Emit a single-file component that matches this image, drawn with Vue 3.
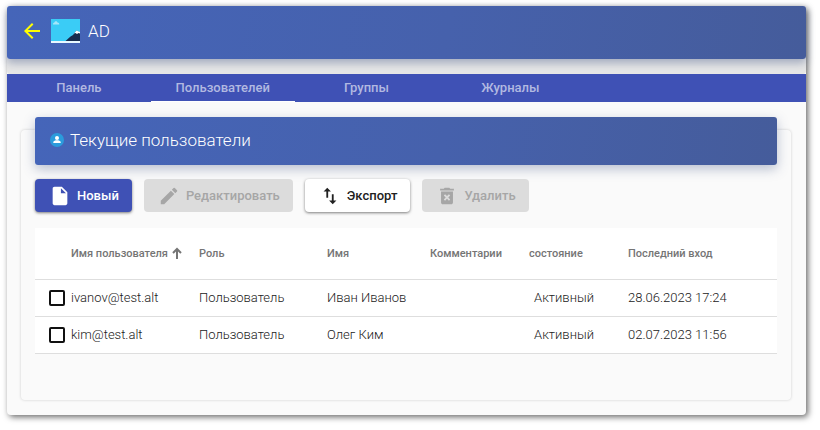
<script setup>
import { ref } from 'vue'

const tabs = ['Панель', 'Пользователей', 'Группы', 'Журналы']
const activeTab = ref('Пользователей')
const users = ref([
  { login: 'ivanov@test.alt', role: 'Пользователь', name: 'Иван Иванов', comment: '', state: 'Активный', lastLogin: '28.06.2023 17:24', selected: false },
  { login: 'kim@test.alt', role: 'Пользователь', name: 'Олег Ким', comment: '', state: 'Активный', lastLogin: '02.07.2023 11:56', selected: false },
])
</script>

<template>
  <main class="window">
    <header class="bar title-bar">
      <button class="back" type="button" aria-label="Назад">
        <svg viewBox="4 4 16 16" width="16" height="16"><path fill="#ff0" d="M20 11H7.83l5.59-5.59L12 4l-8 8 8 8 1.41-1.41L7.83 13H20z" /></svg>
      </button>
      <svg class="picture" viewBox="0 0 29 24" width="29" height="24" aria-hidden="true">
        <path fill="#3accf6" d="M0 0h29v24H0z" />
        <path fill="#a5e6fa" d="M2 5.500c0-1.200.6-1.800 1.400-1.900C3.700 1.800 6 1.700 6.500 3.400 7.700 3.400 8.300 4.300 8.300 5.500z" />
        <path fill="#172b4d" d="M14.500 22l5-4.500 2.500-1.500 3.500-4.500 3.500 2V22z" />
        <path fill="#fff" d="M23 14.500l2.500-3 3.500 1.500v1.500l-1.500-.5-1.500 1-1.500-1z" />
        <path fill="#e8f8ff" d="M0 22h29v2H0z" />
      </svg>
      <h1>AD</h1>
    </header>

    <nav class="tabs">
      <button
        v-for="tab in tabs"
        :key="tab"
        type="button"
        class="tab"
        :class="{ active: tab === activeTab }"
        @click="activeTab = tab"
      >{{ tab }}</button>
    </nav>

    <section class="card">
      <div class="bar card-bar">
        <svg viewBox="0 0 14 14" width="14" height="14" aria-hidden="true">
          <circle cx="7" cy="7" r="7" fill="#2b9bdc" />
          <circle cx="7" cy="5" r="2" fill="#fff" />
          <path fill="#fff" d="M3.300 10V9.200C3.300 7.800 5.600 7.300 7 7.300s3.700.5 3.700 1.900V10z" />
        </svg>
        <h2>Текущие пользователи</h2>
      </div>

      <div class="actions">
        <button type="button" class="action primary">
          <svg viewBox="0 0 24 24" width="22" height="22"><path fill="currentColor" d="M6 2c-1.100 0-2 .9-2 2v16c0 1.100.9 2 2 2h12c1.100 0 2-.9 2-2V8l-6-6H6zm7 7V3.500L18.500 9H13z" /></svg>
          Новый
        </button>
        <button type="button" class="action" disabled>
          <svg viewBox="0 0 24 24" width="22" height="22"><path fill="currentColor" d="M3 17.250V21h3.750L17.810 9.940l-3.750-3.750L3 17.250zM20.710 7.040a1 1 0 0 0 0-1.410l-2.340-2.340a1 1 0 0 0-1.410 0l-1.830 1.830 3.750 3.750 1.830-1.830z" /></svg>
          Редактировать
        </button>
        <button type="button" class="action">
          <svg viewBox="0 0 24 24" width="22" height="22"><path fill="currentColor" d="M16 17.010V10h-2v7.010h-3L15 21l4-3.990h-3zM9 3L5 6.990h3V14h2V6.990h3L9 3z" /></svg>
          Экспорт
        </button>
        <button type="button" class="action" disabled>
          <svg viewBox="0 0 24 24" width="22" height="22"><path fill="currentColor" fill-rule="evenodd" d="M5.500 19c0 1.100.9 2 2 2h9c1.100 0 2-.9 2-2V7h-13zm3-7.500L9.900 10l2.100 2.100 2.100-2.100 1.400 1.500-2.100 2.100 2.100 2.100-1.400 1.400-2.100-2.100-2.100 2.100-1.400-1.400 2.100-2.100zM15.500 4l-1-1h-5l-1 1h-4v2h15V4z" /></svg>
          Удалить
        </button>
      </div>

      <table>
        <colgroup>
          <col class="c-check"><col class="c-wide"><col class="c-wide"><col class="c-name"><col class="c-mid"><col class="c-mid"><col>
        </colgroup>
        <thead>
          <tr>
            <th></th>
            <th>
              <span class="sorted">Имя пользователя
                <svg viewBox="0 0 10 12" width="10" height="12" aria-hidden="true"><path fill="none" stroke="currentColor" stroke-width="2" d="M5 12V2M1 6l4-4 4 4" /></svg>
              </span>
            </th>
            <th>Роль</th>
            <th>Имя</th>
            <th>Комментарии</th>
            <th>состояние</th>
            <th>Последний вход</th>
          </tr>
        </thead>
        <tbody>
          <tr v-for="user in users" :key="user.login">
            <td class="check"><input v-model="user.selected" type="checkbox" :aria-label="user.login"></td>
            <td>{{ user.login }}</td>
            <td>{{ user.role }}</td>
            <td>{{ user.name }}</td>
            <td>{{ user.comment }}</td>
            <td class="state">{{ user.state }}</td>
            <td>{{ user.lastLogin }}</td>
          </tr>
        </tbody>
      </table>
    </section>
  </main>
</template>

<style>
body {
  background: #fff;
}
</style>

<style scoped>
* {
  box-sizing: border-box;
}

.window {
  margin: 6px 14px 14px 7px;
  padding-bottom: 15px;
  border-radius: 4px;
  background: #fafafa;
  box-shadow: 2px 2px 6px rgba(0, 0, 0, 0.6);
  font-family: Roboto, "Liberation Sans", sans-serif;
  color: #212121;
}

.bar {
  display: flex;
  align-items: center;
  border-radius: 3px;
  background: linear-gradient(100deg, #4565b9, #4661ac 55%, #455c9b);
  color: #fff;
}

.title-bar {
  height: 53px;
  padding: 0 17px 4px;
  box-shadow: 0 4px 8px rgba(60, 80, 130, 0.4), 0 15px 0 #e6e6e6;
}

.back {
  display: flex;
  padding: 0;
  border: 0;
  background: none;
  cursor: pointer;
}

.picture {
  margin: 0 8px 0 11px;
}

h1,
h2 {
  margin: 0;
  font-size: 17px;
  font-weight: 300;
  line-height: 24px;
}

.tabs {
  display: flex;
  margin-top: 15px;
  background: #3f51b5;
}

.tab {
  width: 18%;
  height: 28px;
  padding: 0;
  border: 0;
  border-bottom: 1px solid transparent;
  background: none;
  color: #b2b9e1;
  font: 500 13px/27px Roboto, "Liberation Sans", sans-serif;
  cursor: pointer;
}

.tab.active {
  border-bottom-color: #fff;
}

.card {
  display: flow-root;
  margin: 28px 15px 0 14px;
  padding: 0 14px 46px;
  border-radius: 4px;
  box-shadow: 0 0 3px rgba(0, 0, 0, 0.18);
}

.card-bar {
  height: 48px;
  margin-top: -13px;
  padding: 0 15px 2px;
  gap: 6px;
  box-shadow: 0 4px 12px rgba(60, 80, 130, 0.35);
}

.actions {
  display: flex;
  gap: 12px;
  margin: 14px 0 16px;
}

.action {
  display: flex;
  align-items: center;
  gap: 6px;
  height: 33px;
  padding: 0 13px 0 14px;
  border: 0;
  border-radius: 4px;
  background: #fff;
  color: #212121;
  font: 500 13px/16px Roboto, "Liberation Sans", sans-serif;
  box-shadow: 0 1px 3px rgba(0, 0, 0, 0.5);
  cursor: pointer;
}

.action.primary {
  background: #3f51b5;
  color: #fff;
}

.action:disabled {
  background: #dcdcdc;
  color: #a6a6a6;
  box-shadow: none;
  cursor: default;
}

table {
  width: 100%;
  table-layout: fixed;
  border-collapse: collapse;
  background: #fff;
  font-size: 13px;
}

.c-check {
  width: 36px;
}

.c-wide {
  width: 128px;
}

.c-name {
  width: 103px;
}

.c-mid {
  width: 99px;
}

th,
td {
  padding: 0;
  border-bottom: 1px solid #dedede;
  text-align: left;
  white-space: nowrap;
}

th {
  height: 51px;
  color: #757575;
  font-size: 11px;
  font-weight: 500;
}

td {
  height: 37px;
  font-weight: 300;
}

.sorted {
  display: flex;
  align-items: center;
  gap: 4px;
}

.check {
  padding-left: 14px;
}

.state {
  padding-left: 5px;
}

input {
  display: block;
  width: 16px;
  height: 16px;
  margin: 0;
  appearance: none;
  border: 2px solid #111;
  border-radius: 2px;
  background: #fff;
}

input:checked {
  background: #3f51b5;
}
</style>
